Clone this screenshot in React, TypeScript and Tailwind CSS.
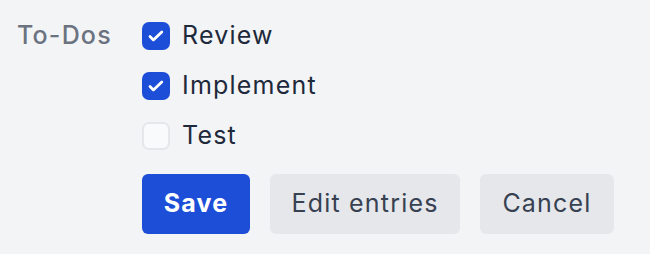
import React, { useState } from "react";

const items = [
  { label: "Review", done: true },
  { label: "Implement", done: true },
  { label: "Test", done: false },
];

const Check = () => (
  <svg viewBox="0 0 28 28" className="h-[28px] w-[28px]" fill="none">
    <path
      d="M8 14.6l3.4 3.3L19.8 10"
      stroke="white"
      strokeWidth="2.8"
      strokeLinecap="round"
      strokeLinejoin="round"
    />
  </svg>
);

export default function App() {
  const [todos, setTodos] = useState(items);

  const toggle = (i: number) =>
    setTodos((t) => t.map((x, j) => (j === i ? { ...x, done: !x.done } : x)));

  return (
    <div
      className="min-h-screen w-full bg-[#f3f4f6] pt-[11px] pl-[17px] tracking-[1.2px]"
      style={{ fontFamily: "Inter, 'Noto Sans', sans-serif" }}
    >
      <div className="flex">
        <div className="w-[125px] shrink-0">
          <div className="flex h-[50px] items-center text-[25px] font-medium text-[#6b7280]">
            To-Dos
          </div>
        </div>
        <div className="flex flex-col">
          {todos.map((t, i) => (
            <label
              key={t.label}
              className="flex h-[50px] cursor-pointer items-center gap-[12px]"
              onClick={() => toggle(i)}
            >
              {t.done ? (
                <span className="flex h-[28px] w-[28px] items-center justify-center rounded-[7px] bg-[#1d4ed8]">
                  <Check />
                </span>
              ) : (
                <span className="h-[28px] w-[28px] rounded-[7px] border-[2.5px] border-[#e5e7eb] bg-[#f9fafb]" />
              )}
              <span className="text-[25px] text-[#1e293b]">{t.label}</span>
            </label>
          ))}
          <div className="mt-[13px] flex gap-[20px]">
            <button className="h-[60px] w-[108px] rounded-[6px] bg-[#1d4ed8] text-[25px] font-bold text-white">
              Save
            </button>
            <button className="h-[60px] w-[190px] rounded-[6px] bg-[#e5e7eb] text-[25px] text-[#374151]">
              Edit entries
            </button>
            <button className="h-[60px] w-[134px] rounded-[6px] bg-[#e5e7eb] text-[25px] text-[#374151]">
              Cancel
            </button>
          </div>
        </div>
      </div>
    </div>
  );
}
